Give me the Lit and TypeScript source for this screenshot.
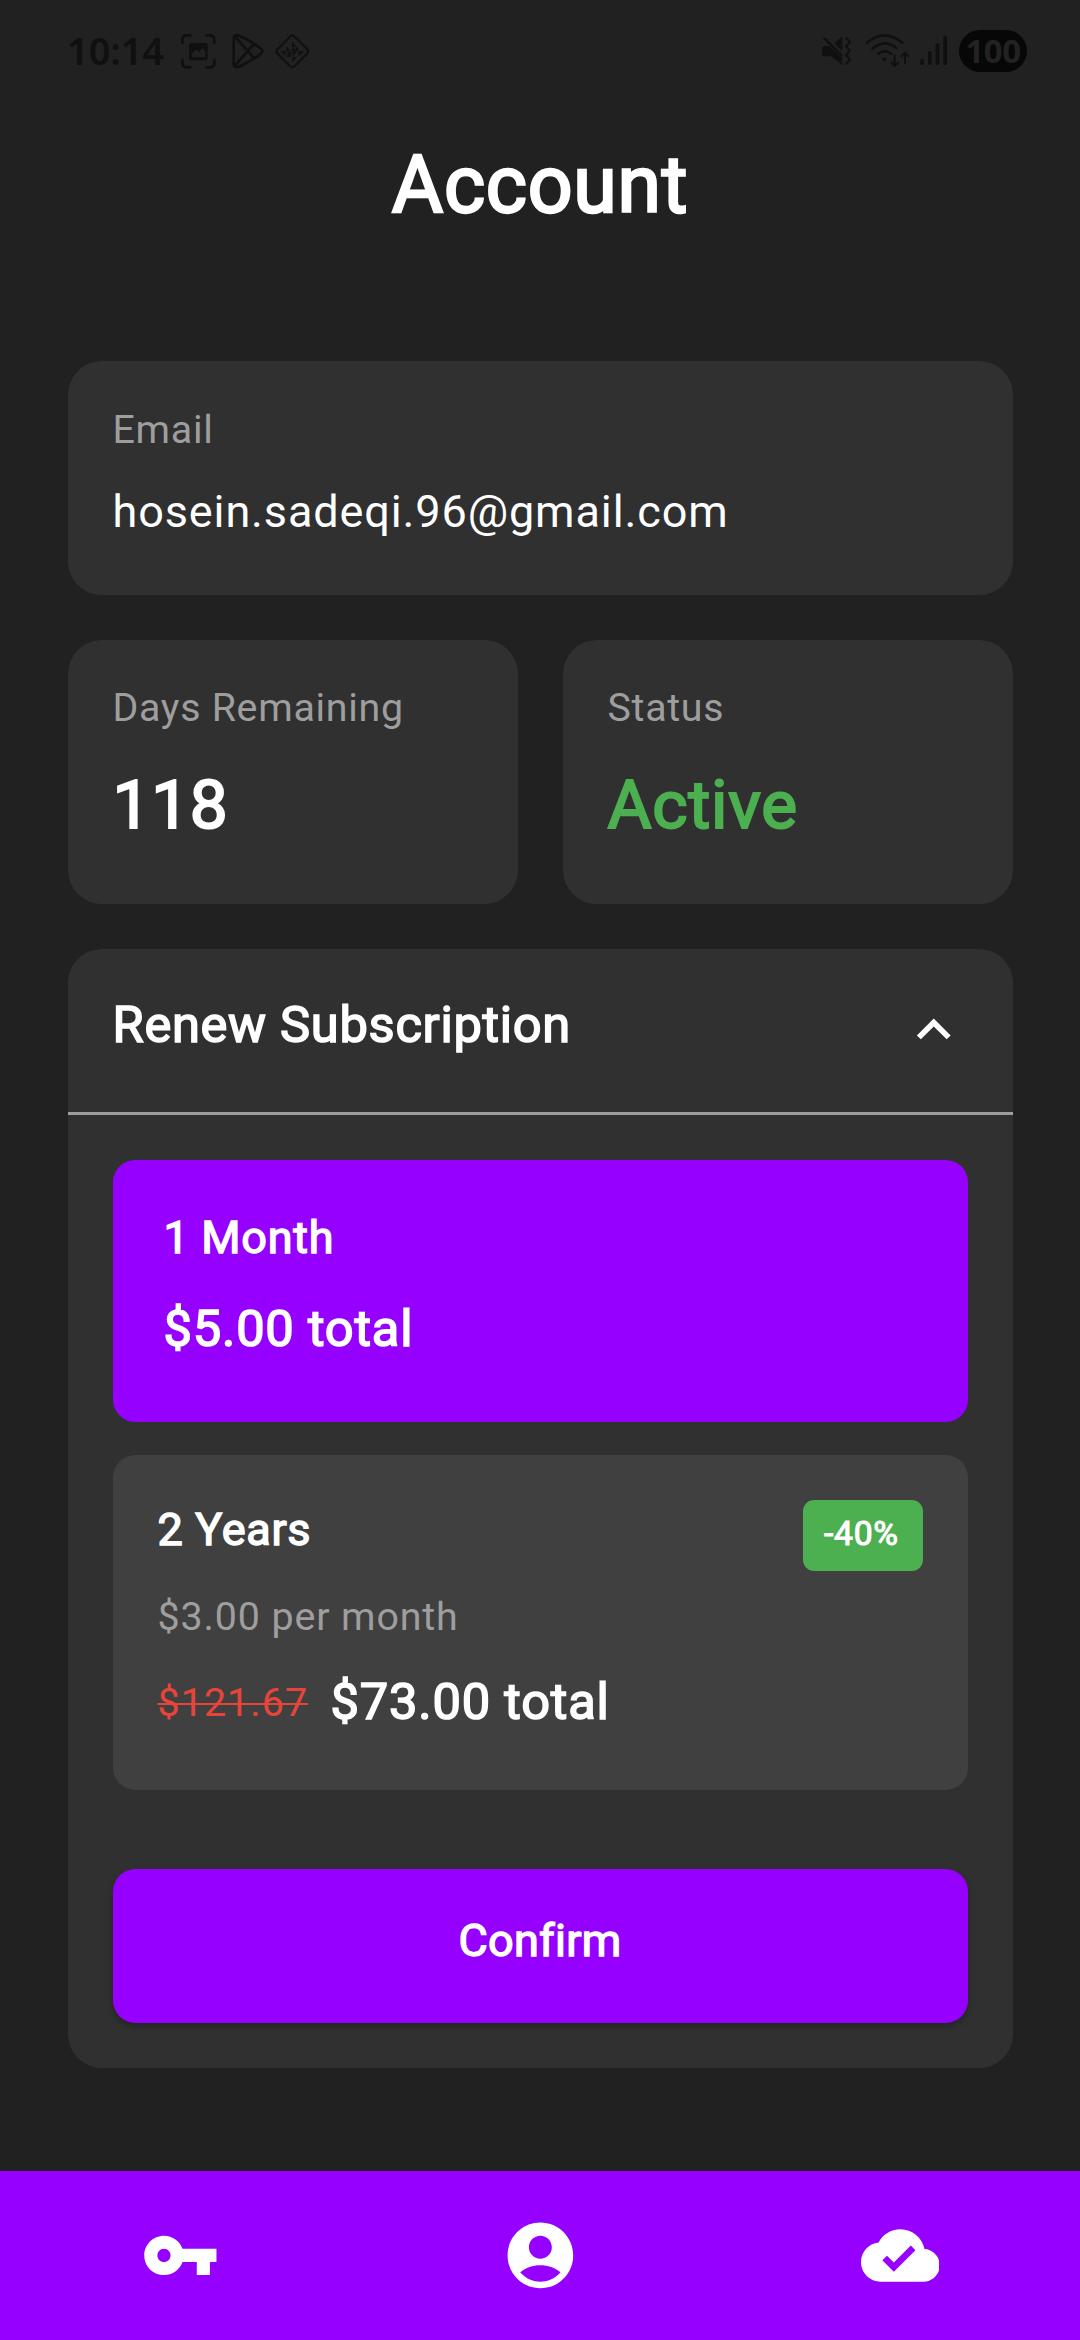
import { LitElement, html, css } from "lit";
import { customElement, state } from "lit/decorators.js";

const paths = {
  key: "M12.65 10C11.83 7.67 9.61 6 7 6c-3.31 0-6 2.69-6 6s2.69 6 6 6c2.61 0 4.83-1.67 5.65-4H17v4h4v-4h2v-4H12.65zM7 14c-1.1 0-2-.9-2-2s.9-2 2-2 2 .9 2 2-.9 2-2 2z",
  account:
    "M12 2C6.48 2 2 6.48 2 12s4.48 10 10 10 10-4.48 10-10S17.52 2 12 2zm0 4c1.93 0 3.5 1.57 3.5 3.5S13.93 13 12 13s-3.5-1.57-3.5-3.5S10.07 6 12 6zm0 14c-2.03 0-4.43-.82-6.14-2.88C7.55 15.8 9.68 15 12 15s4.45.8 6.14 2.12C16.43 19.18 14.03 20 12 20z",
  cloud:
    "M19.35 10.04C18.67 6.59 15.64 4 12 4 9.11 4 6.6 5.64 5.35 8.04 2.34 8.36 0 10.91 0 14c0 3.31 2.69 6 6 6h13c2.76 0 5-2.24 5-5 0-2.64-2.05-4.78-4.65-4.96zM10 17l-3.5-3.5 1.41-1.41L10 14.17 15.18 9l1.41 1.41L10 17z",
  up: "M12 8l-6 6 1.41 1.41L12 10.83l4.59 4.58L18 14z",
  down: "M16.59 8.59L12 13.17 7.41 8.59 6 10l6 6 6-6z",
};

@customElement("status-bar")
class StatusBar extends LitElement {
  static styles = css`
    :host {
      display: flex;
      align-items: flex-start;
      box-sizing: border-box;
      height: 97px;
      padding: 30px 53px 0 67px;
      color: #101010;
      font-family: "Noto Sans", "Open Sans", sans-serif;
    }
    .clock {
      width: 113px;
      height: 43px;
      line-height: 41px;
      font-size: 38px;
      font-weight: 600;
      letter-spacing: -0.1px;
    }
    .left,
    .right {
      display: flex;
    }
    .play {
      margin: 0 10px 0 14px;
    }
    .right {
      margin-left: auto;
    }
    .wifi {
      margin: 0 9px 0 12px;
    }
    svg {
      display: block;
      fill: none;
      stroke: currentColor;
      stroke-linecap: round;
      stroke-linejoin: round;
    }
    .solid {
      fill: currentColor;
      stroke: none;
    }
    .hollow {
      fill: #202020;
      stroke: none;
    }
    .battery {
      width: 68px;
      height: 42px;
      margin-left: 11px;
      border-radius: 21px;
      background: #070707;
      color: #222;
      font-size: 33px;
      line-height: 41px;
      font-weight: 700;
      text-align: center;
      letter-spacing: -0.4px;
    }
  `;

  render() {
    return html`
      <div class="clock">10:14</div>
      <div class="left">
        <svg width="37" height="42.67" viewBox="390 30 111 128" stroke-width="8">
          <path
            d="M397 68V59Q397 46 410 46H421M469 46H480Q493 46 493 59V68M397 119V129Q397 142 410 142H421M469 142H480Q493 142 493 129V119"
          />
          <rect class="solid" x="417" y="69" width="56" height="52" rx="8" />
          <path class="hollow" d="M425 112V101L436 91Q440 88 443 92L447 97L455 86Q458 83 461 87L466 96V112Z" />
        </svg>
        <svg class="play" width="33" height="42.67" viewBox="543 30 99 128" stroke-width="8">
          <path d="M551 57Q551 43 564 46Q600 60 630 84Q644 93 630 103Q600 126 566 141Q551 145 551 131Z" />
          <path d="M555 50L612 114M555 137L610 74" />
        </svg>
        <svg width="37" height="42.67" viewBox="672 30 111 128">
          <rect x="691" y="58" width="72" height="72" rx="9" transform="rotate(45 727 94)" stroke-width="6" />
          <path
            class="solid"
            d="M726 65V80H740ZM709 79V93H723ZM726 80L740 94H726ZM744 80V93H730ZM692 94H707V107ZM709 95H724V110ZM728 95H742L728 109ZM745 94H763L745 109ZM709 110H724L716 100ZM727 111H741L727 127Z"
          />
        </svg>
      </div>
      <div class="right">
        <svg width="33" height="42.67" viewBox="64 30 99 128">
          <path class="solid" d="M70 86Q70 78 78 78H92L131 114V136L98 109H78Q70 109 70 101ZM107 70L131 49V94Z" />
          <path d="M77 55L129 106" stroke-width="7" />
          <path d="M143 54L154 66L142 80L154 92L142 105L154 118L143 132" stroke-width="6" />
        </svg>
        <svg class="wifi" width="46" height="42.67" viewBox="198 30 138 128">
          <path d="M204 68Q256 24 310 68M221 86Q256 56 292 84M238 101Q256 86 276 101" stroke-width="8" />
          <circle class="solid" cx="256" cy="118" r="6" />
          <path d="M287 107V137M277 128L287 138L298 128M318 130V99M307 109L318 98L329 109" stroke-width="6" />
        </svg>
        <svg width="28" height="42.67" viewBox="362 30 84 128">
          <g class="solid">
            <rect x="363" y="116" width="11" height="19" rx="4" />
            <rect x="386" y="93" width="11" height="42" rx="4" />
            <rect x="409" y="70" width="11" height="65" rx="4" />
            <rect x="432" y="48" width="11" height="87" rx="4" />
          </g>
        </svg>
        <div class="battery">100</div>
      </div>
    `;
  }
}

interface Plan {
  id: string;
  name: string;
  total: string;
  monthly?: string;
  before?: string;
  discount?: string;
}

const plans: Plan[] = [
  { id: "month", name: "1 Month", total: "$5.00 total" },
  {
    id: "years",
    name: "2 Years",
    total: "$73.00 total",
    monthly: "$3.00 per month",
    before: "$121.67",
    discount: "-40%",
  },
];

@customElement("app-root")
class AppRoot extends LitElement {
  @state() private open = true;
  @state() private selected = "month";

  static styles = css`
    :host {
      display: flex;
      flex-direction: column;
      width: 1080px;
      height: 2340px;
      background: #212121;
      color: #fff;
      font-family: Roboto, sans-serif;
      font-size: 45px;
      letter-spacing: 0.7px;
      white-space: nowrap;
    }
    .strong {
      -webkit-text-stroke: 0.03125em currentColor;
    }
    .title {
      margin: 0;
      height: 264px;
      box-sizing: border-box;
      padding-top: 37.5px;
      font-size: 78.75px;
      line-height: 100px;
      font-weight: 400;
      text-align: center;
    }
    main {
      flex: 1;
      display: flex;
      flex-direction: column;
      gap: 45px;
      padding: 0 67.5px;
    }
    .card {
      box-sizing: border-box;
      background: #303030;
      border-radius: 33.75px;
    }
    .info {
      padding: 45px;
    }
    .email {
      height: 233.8px;
    }
    .stats {
      display: grid;
      grid-template-columns: 1fr 1fr;
      gap: 45px;
      height: 264px;
    }
    .label {
      font-size: 39.375px;
      line-height: 48px;
      color: #9e9e9e;
    }
    .stats .info {
      padding-top: 44px;
    }
    .value {
      margin-top: 31.3px;
      line-height: 54px;
      letter-spacing: 0.88px;
    }
    .figure {
      margin-top: 33px;
      font-size: 67.5px;
      line-height: 80px;
    }
    .active {
      color: #4caf50;
    }
    .renew-head {
      display: flex;
      justify-content: space-between;
      align-items: flex-start;
      box-sizing: border-box;
      height: 166px;
      padding: 45px 45px 0;
      border-bottom: 3px solid #9e9e9e;
      font-size: 50.625px;
      line-height: 62px;
    }
    .chevron {
      display: block;
      width: 67.5px;
      height: 67.5px;
      margin-top: 2.2px;
      fill: #fff;
    }
    .renew-body {
      padding: 45px;
    }
    .plan {
      box-sizing: border-box;
      background: #404040;
      border-radius: 22.5px;
      padding: 45px;
      height: 335px;
    }
    .plan + .plan {
      margin-top: 33.5px;
    }
    .plan.brief {
      height: 262px;
    }
    .plan.selected {
      background: #9500ff;
      border: 5.6px solid #9500ff;
      padding-left: 46px;
    }
    .plan-top {
      display: flex;
      justify-content: space-between;
      height: 70.3px;
      line-height: 60px;
    }
    .brief .plan-top {
      height: 88px;
      line-height: 55px;
    }
    .badge {
      box-sizing: border-box;
      width: 120px;
      height: 70.3px;
      padding-left: 21.5px;
      border-radius: 11.25px;
      background: #4caf50;
      font-size: 33.75px;
      line-height: 67px;
    }
    .monthly {
      margin-top: 22px;
      font-size: 39.375px;
      line-height: 48px;
      letter-spacing: 0.88px;
      color: #9e9e9e;
    }
    .total-row {
      display: flex;
      align-items: baseline;
      gap: 22.5px;
      margin-top: 31.3px;
      font-size: 50.625px;
      line-height: 60px;
      letter-spacing: 0.8px;
    }
    .brief .total-row {
      margin-top: 1px;
    }
    .before {
      position: relative;
      top: -3px;
      font-size: 39.375px;
      letter-spacing: 1.07px;
      color: #e8453a;
      text-decoration: line-through;
      text-decoration-thickness: 2px;
    }
    .confirm {
      display: block;
      box-sizing: border-box;
      width: 100%;
      height: 154.7px;
      margin-top: 78.5px;
      padding: 0 0 11px;
      border: 0;
      border-radius: 22.5px;
      background: #9500ff;
      box-shadow: 0 4px 6px rgba(0, 0, 0, 0.24);
      color: #fff;
      font: 400 45px Roboto, sans-serif;
      letter-spacing: 0.3px;
    }
    nav {
      display: flex;
      justify-content: space-around;
      box-sizing: border-box;
      height: 169px;
      padding-top: 45px;
      background: #9500ff;
    }
    .tab {
      display: block;
      width: 78.75px;
      height: 78.75px;
      fill: #fff;
    }
  `;

  private plan(p: Plan) {
    const cls = `plan ${p.monthly ? "" : "brief"} ${p.id === this.selected ? "selected" : ""}`;
    return html`
      <div class=${cls} @click=${() => (this.selected = p.id)}>
        <div class="plan-top">
          <span class="strong">${p.name}</span>
          ${p.discount ? html`<span class="badge strong">${p.discount}</span>` : ""}
        </div>
        ${p.monthly ? html`<div class="monthly">${p.monthly}</div>` : ""}
        <div class="total-row">
          ${p.before ? html`<span class="before">${p.before}</span>` : ""}
          <span class="strong">${p.total}</span>
        </div>
      </div>
    `;
  }

  render() {
    return html`
      <status-bar></status-bar>
      <h1 class="title strong">Account</h1>
      <main>
        <section class="card info email">
          <div class="label">Email</div>
          <div class="value">hosein.sadeqi.96@gmail.com</div>
        </section>
        <section class="stats">
          <div class="card info">
            <div class="label">Days Remaining</div>
            <div class="figure strong">118</div>
          </div>
          <div class="card info">
            <div class="label">Status</div>
            <div class="figure strong active">Active</div>
          </div>
        </section>
        <section class="card">
          <div class="renew-head" @click=${() => (this.open = !this.open)}>
            <span class="strong">Renew Subscription</span>
            <svg class="chevron" viewBox="0 0 24 24"><path d=${this.open ? paths.up : paths.down} /></svg>
          </div>
          ${this.open
            ? html`<div class="renew-body">
                ${plans.map((p) => this.plan(p))}
                <button class="confirm strong">Confirm</button>
              </div>`
            : ""}
        </section>
      </main>
      <nav>
        ${[paths.key, paths.account, paths.cloud].map(
          (d) => html`<svg class="tab" viewBox="0 0 24 24"><path d=${d} /></svg>`
        )}
      </nav>
    `;
  }
}
